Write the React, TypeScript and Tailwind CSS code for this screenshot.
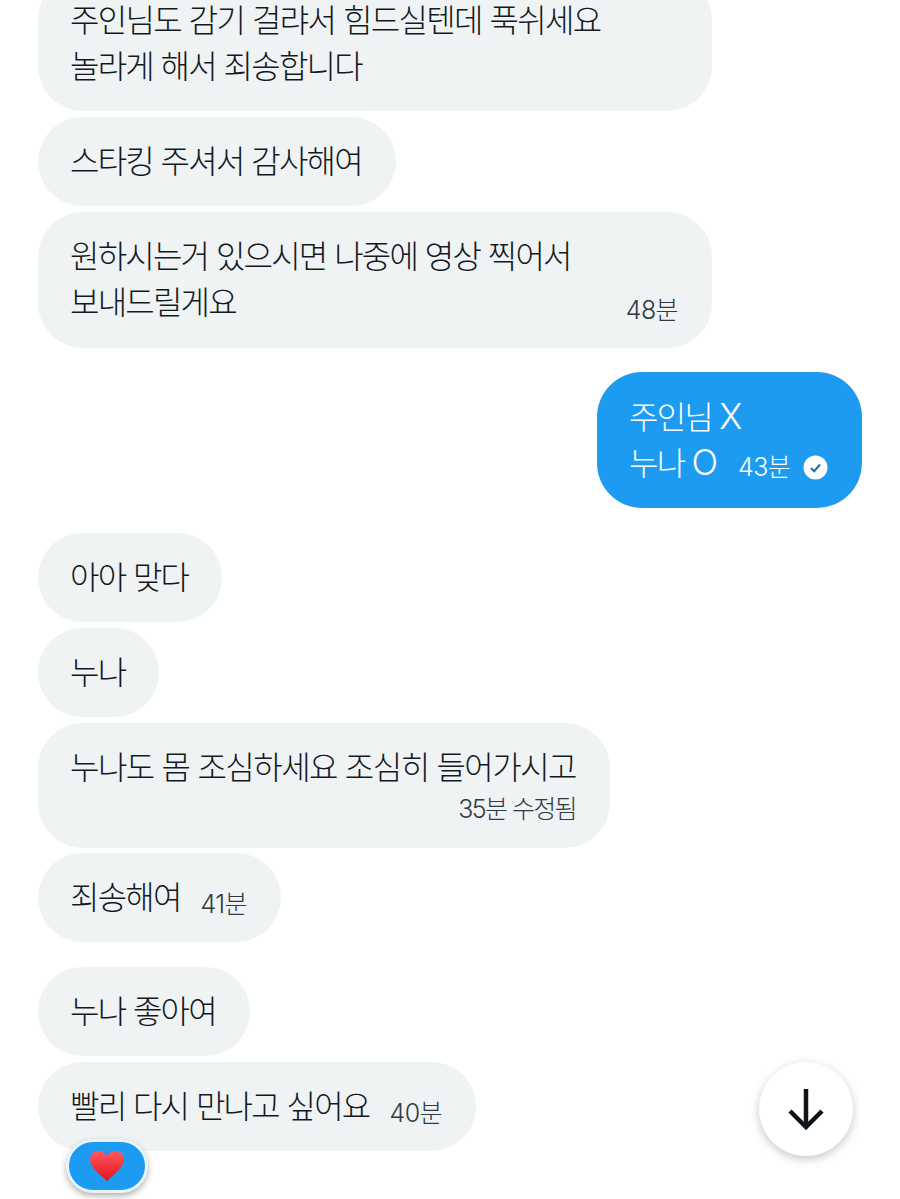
const font = { fontFamily: 'Inter, "Noto Sans CJK KR", "Noto Sans", sans-serif' }

const Time = ({ children, className = '' }: { children: React.ReactNode; className?: string }) => (
  <span className={`text-[25px] leading-[30px] font-light tracking-[-0.6px] ${className}`}>{children}</span>
)

const Bubble = ({ children, className = '' }: { children: React.ReactNode; className?: string }) => (
  <div className={`rounded-[45px] bg-[#eff3f4] pl-[32px] pr-[34px] text-[32px] leading-[46px] font-light tracking-[-1.8px] [word-spacing:0.5px] text-[#14191f] ${className}`}>
    {children}
  </div>
)

export default function App() {
  return (
    <div style={font} className="relative h-[1199px] w-[900px] overflow-hidden bg-white">
      <div className="flex flex-col items-start pl-[38px] pr-[38px]">
        <div className="-mt-[25px] flex flex-col items-start gap-[6px]">
          <Bubble className="h-[136px] w-[674px] pt-[23px]">
            <div className="tracking-[-1.7px]">주인님도 감기 걸랴서 힘드실텐데 푹쉬세요</div>
            <div>놀라게 해서 죄송합니다</div>
          </Bubble>
          <Bubble className="h-[89px] pt-[22px]">스타킹 주셔서 감사해여</Bubble>
          <Bubble className="flex h-[136px] w-[674px] items-end justify-between pt-[24px] pb-[22px]">
            <div>
              <div>원하시는거 있으시면 나중에 영상 찍어서</div>
              <div>보내드릴게요</div>
            </div>
            <Time className="-translate-y-[1px] text-[#2f3a44]">48분</Time>
          </Bubble>
        </div>

        <div className="mt-[24px] flex h-[136px] w-[265px] flex-col self-end rounded-[45px] bg-[#1d9bf0] pl-[32px] pr-[20px] pt-[23px] text-[32px] leading-[46px] font-light tracking-[-1.8px] text-white">
          <div>
            주인님 <span className="text-[35px] leading-[30px] tracking-normal">X</span>
          </div>
          <div className="flex items-center">
            <span>
              누나 <span className="text-[35px] leading-[30px] tracking-normal">O</span>
            </span>
            <Time className="ml-[20px] mt-[6px] text-white">43분</Time>
            <svg className="ml-[13px] mt-[6px]" width="25" height="25" viewBox="0 0 25 25">
              <circle cx="12.5" cy="12.5" r="12" fill="#fff" />
              <path d="M8 13l3.2 3.2L17 9.5" fill="none" stroke="#1d6fa8" strokeWidth="2" />
            </svg>
          </div>
        </div>

        <div className="mt-[25px] flex flex-col items-start gap-[6px]">
          <Bubble className="h-[89px] pt-[22px]">아아 맞다</Bubble>
          <Bubble className="h-[89px] pt-[22px]">누나</Bubble>
          <Bubble className="flex h-[125px] flex-col items-end pt-[22px] tracking-[-1.55px]">
            <div>누나도 몸 조심하세요 조심히 들어가시고</div>
            <Time className="mt-[3px] text-[#2f3a44] tracking-[-1.7px]">35분 수정됨</Time>
          </Bubble>
          <Bubble className="-mt-[1px] flex h-[89px] items-end gap-[20px] pt-[22px] pb-[21px]">
            <span>죄송해여</span>
            <Time className="-translate-y-[2px] text-[#2f3a44]">41분</Time>
          </Bubble>
        </div>

        <div className="mt-[25px] flex flex-col items-start gap-[6px]">
          <Bubble className="h-[89px] pt-[22px]">누나 좋아여</Bubble>
          <Bubble className="flex h-[89px] items-end gap-[20px] pt-[22px] pb-[21px]">
            <span>빨리 다시 만나고 싶어요</span>
            <Time className="-translate-y-[2px] text-[#2f3a44]">40분</Time>
          </Bubble>
        </div>
      </div>

      <div className="absolute left-[66px] top-[1139px] flex h-[54px] w-[82px] items-center justify-center rounded-full border-[3px] border-[#e8f5fe] bg-[#1d9bf0] shadow-[0_3px_6px_rgba(0,0,0,0.3)]">
        <svg width="36" height="32" viewBox="0 0 36 32">
          <defs>
            <linearGradient id="heart" x1="0" y1="0" x2="0" y2="1">
              <stop offset="0" stopColor="#ff5a5f" />
              <stop offset="1" stopColor="#e8101c" />
            </linearGradient>
          </defs>
          <path d="M18 31C12 25 1 18 1 9.500C1 4.500 5 1 9.500 1C13 1 16.500 3 18 6.500C19.500 3 23 1 26.500 1C31 1 35 4.500 35 9.500C35 18 24 25 18 31Z" fill="url(#heart)" />
        </svg>
      </div>

      <div className="absolute left-[759px] top-[1062px] flex h-[94px] w-[94px] items-center justify-center rounded-full bg-white shadow-[0_3px_10px_rgba(0,0,0,0.22)]">
        <svg width="36" height="42" viewBox="0 0 36 42" fill="none" stroke="#0f1419" strokeWidth="4.500">
          <path d="M18 1v37" />
          <path d="M2 23l16 16 16-16" />
        </svg>
      </div>
    </div>
  )
}
